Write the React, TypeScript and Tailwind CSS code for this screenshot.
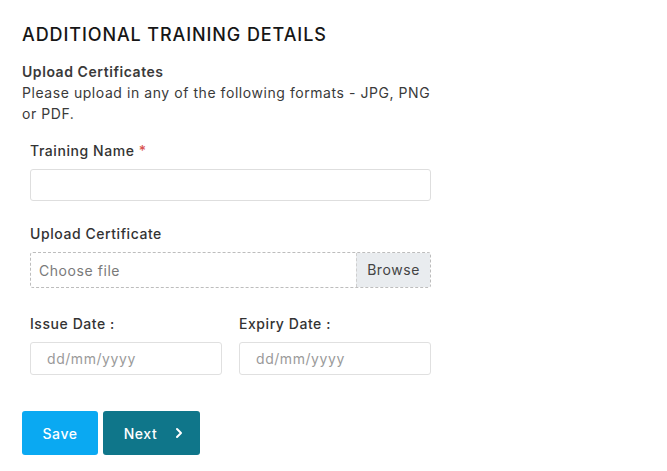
import { ChevronRight } from "lucide-react"

export default function App() {
  return (
    <div className="min-h-screen bg-white px-[22px] pt-[22px] text-[#3b3b3b] font-['Inter','Noto_Sans',sans-serif] tracking-[0.035em]">
      <h2 className="text-[18px] font-medium leading-[26px] text-[#161616] tracking-[0.05em]">
        ADDITIONAL TRAINING DETAILS
      </h2>

      {/* Upload hint */}
      <div className="mt-[14px] w-[412px]">
        <p className="text-[14px] font-semibold leading-[20px] text-[#3a3a3a]">Upload Certificates</p>
        <p className="text-[14px] leading-[21px] text-[#3a3a3a]">
          Please upload in any of the following formats - JPG, PNG or PDF.
        </p>
      </div>

      {/* Form */}
      <div className="ml-2 mt-[17px] w-[401px] flex flex-col">
        <label className="text-[14px] font-medium leading-[20px] text-[#333]">
          Training Name <span className="text-[#d9534f]">*</span>
        </label>
        <input
          type="text"
          className="mt-[8px] h-[32px] w-full rounded-[3px] border border-[#dedede] px-2 text-[14px] outline-none"
        />

        <label className="mt-[23px] text-[14px] font-medium leading-[20px] text-[#333]">
          Upload Certificate
        </label>
        <div className="mt-[8px] flex h-[36px] w-full rounded-[3px] border border-dashed border-[#bdbdbd]">
          <div className="flex flex-1 items-center px-2 text-[14px] text-[#7a7a7a]">Choose file</div>
          <div className="flex w-[74px] items-start justify-center border-l border-dashed border-[#cfcfcf] bg-[#e9ecef] pt-[6px] text-[14px] text-[#444]">
            Browse
          </div>
        </div>

        <div className="mt-[26px] grid grid-cols-2 gap-x-[17px]">
          <div className="flex flex-col">
            <label className="text-[14px] font-medium leading-[20px] text-[#333]">Issue Date :</label>
            <div className="mt-[8px] flex h-[33px] items-center rounded-[3px] border border-[#e0e0e0] px-4 text-[14px] text-[#9a9a9a]">
              dd/mm/yyyy
            </div>
          </div>
          <div className="flex flex-col">
            <label className="text-[14px] font-medium leading-[20px] text-[#333]">Expiry Date :</label>
            <div className="mt-[8px] flex h-[33px] items-center rounded-[3px] border border-[#e0e0e0] px-4 text-[14px] text-[#9a9a9a]">
              dd/mm/yyyy
            </div>
          </div>
        </div>
      </div>

      {/* Actions */}
      <div className="mt-[36px] flex gap-[5px]">
        <button className="h-[44px] w-[76px] rounded-[3px] bg-[#0aa9f2] text-[14px] font-medium text-white">
          Save
        </button>
        <button className="flex h-[44px] w-[97px] items-center justify-center gap-[14px] rounded-[3px] bg-[#0f768a] pl-[8px] text-[14px] font-medium text-white">
          Next
          <ChevronRight size={16} strokeWidth={3} />
        </button>
      </div>
    </div>
  )
}
